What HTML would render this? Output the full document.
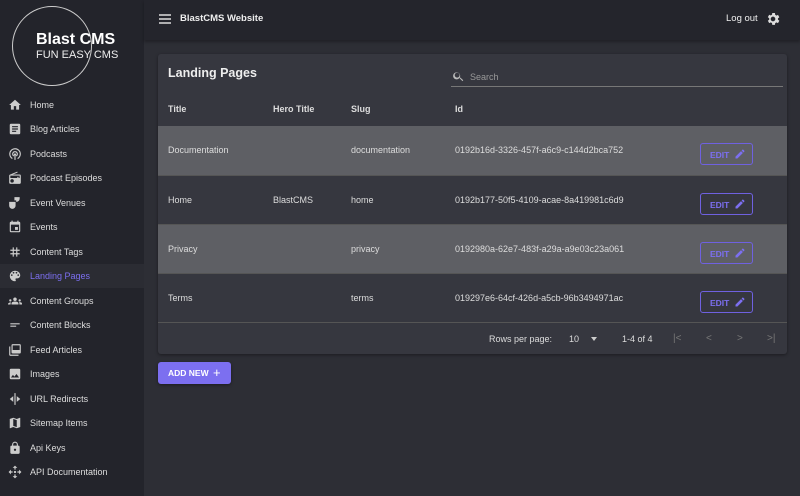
<!DOCTYPE html>
<html><head><style>
*{box-sizing:border-box;margin:0;padding:0}
body{width:800px;height:496px;overflow:hidden;background:#2d2e35;font-family:"Liberation Sans",sans-serif;color:#ddd;position:relative}
.side{position:absolute;left:0;top:0;width:144px;height:496px;background:#23242b}
.logo{position:absolute;left:12px;top:6px;width:80px;height:80px;border:1px solid #ccc;border-radius:50%}
.lt1{position:absolute;left:36px;top:31px;font-size:16px;font-weight:bold;color:#fff}
.lt2{position:absolute;left:36px;top:49px;font-size:11px;color:#eee}
.item{position:absolute;left:0;width:144px;height:24px;font-size:9px;color:#ddd;display:flex;align-items:center}
.item svg{position:absolute;left:8px;width:14px;height:14px;fill:#ccc}
.item span{position:absolute;left:30px}
.act{background:#2b2c33;color:#7c6ff0}
.top{position:absolute;left:144px;top:0;width:656px;height:40px;background:#24252c;box-shadow:0 2px 3px rgba(0,0,0,.3)}
.card{position:absolute;left:158px;top:54px;width:629px;height:300px;background:#36373f;border-radius:3px;box-shadow:0 1px 3px rgba(0,0,0,.4)}
.t{position:absolute;font-size:9px;color:#ddd}
.h{font-weight:bold}
.row{position:absolute;left:0;width:629px;border-bottom:1px solid #555}
.hl{background:#5e5f64}
.edit{position:absolute;left:542px;width:53px;height:22px;border:1px solid #6f61e0;border-radius:3px;color:#7c6ff0;font-size:8.5px;font-weight:bold;padding:6px 0 0 9px}
.edit svg{position:absolute;left:33px;top:4px;width:12px;height:12px;fill:#7c6ff0}
</style></head><body>
<div class="side">
<div class="logo"></div><div class="lt1">Blast CMS</div><div class="lt2">FUN EASY CMS</div>
<div class="item" style="top:93px"><svg viewBox="0 0 24 24"><path d="M10 20v-6h4v6h5v-8h3L12 3 2 12h3v8z"/></svg><span>Home</span></div>
<div class="item" style="top:117px"><svg viewBox="0 0 24 24"><path d="M19 3H5a2 2 0 0 0-2 2v14a2 2 0 0 0 2 2h14a2 2 0 0 0 2-2V5a2 2 0 0 0-2-2zm-5 14H7v-2h7zm3-4H7v-2h10zm0-4H7V7h10z"/></svg><span>Blog Articles</span></div>
<div class="item" style="top:142px"><svg viewBox="0 0 24 24"><path d="M12 11a2 2 0 0 0-1 3.7V22h2v-7.3a2 2 0 0 0-1-3.7zm0-9a10 10 0 0 0-5 18.6l1-1.7A8 8 0 1 1 16 19l1 1.7A10 10 0 0 0 12 2zm0 5a5 5 0 0 0-2.5 9.3l1-1.7a3 3 0 1 1 3 0l1 1.7A5 5 0 0 0 12 7z"/></svg><span>Podcasts</span></div>
<div class="item" style="top:166px"><svg viewBox="0 0 24 24"><path d="M3.2 6.2A2 2 0 0 0 2 8v12a2 2 0 0 0 2 2h16a2 2 0 0 0 2-2V8a2 2 0 0 0-2-2H8.3l8.3-3.4L15.9 1zM7 20a3 3 0 1 1 0-6 3 3 0 0 1 0 6zm13-8h-2v-2h-2v2H4V8h16z"/></svg><span>Podcast Episodes</span></div>
<div class="item" style="top:191px"><svg viewBox="0 0 24 24"><path d="M2 16.5A5.5 5.5 0 0 0 7.5 22a5.5 5.5 0 0 0 5.5-5.5V10H2zM11 2v5.5h3V10h.5A5.5 5.5 0 0 0 20 4.5V2z"/></svg><span>Event Venues</span></div>
<div class="item" style="top:215px"><svg viewBox="0 0 24 24"><path d="M17 12h-5v5h5zM16 1v2H8V1H6v2H5a2 2 0 0 0-2 2v14a2 2 0 0 0 2 2h14a2 2 0 0 0 2-2V5a2 2 0 0 0-2-2h-1V1zm3 18H5V8h14z"/></svg><span>Events</span></div>
<div class="item" style="top:240px"><svg viewBox="0 0 24 24"><path d="M20 10V8h-4V4h-2v4h-4V4H8v4H4v2h4v4H4v2h4v4h2v-4h4v4h2v-4h4v-2h-4v-4zm-6 4h-4v-4h4z"/></svg><span>Content Tags</span></div>
<div class="item act" style="top:264px"><svg viewBox="0 0 24 24"><path d="M12 3a9 9 0 0 0 0 18 1.5 1.5 0 0 0 1.1-2.5 1.5 1.5 0 0 1 1.1-2.5H16a5 5 0 0 0 5-5c0-4.4-4-8-9-8zM6.5 12a1.5 1.5 0 1 1 0-3 1.5 1.5 0 0 1 0 3zm3-4a1.5 1.5 0 1 1 0-3 1.5 1.5 0 0 1 0 3zm5 0a1.5 1.5 0 1 1 0-3 1.5 1.5 0 0 1 0 3zm3 4a1.5 1.5 0 1 1 0-3 1.5 1.5 0 0 1 0 3z"/></svg><span>Landing Pages</span></div>
<div class="item" style="top:289px"><svg viewBox="0 0 24 24"><path d="M12 12.8c1.6 0 3 .4 4.2.9 1 .5 1.8 1.5 1.8 2.7V18H6v-1.6c0-1.2.7-2.2 1.8-2.7A10 10 0 0 1 12 12.8zM4 13a2 2 0 1 0 0-4 2 2 0 0 0 0 4zm1.1 1.1A7 7 0 0 0 0 16.4V18h4.5v-1.6c0-.8.2-1.6.6-2.3zM20 13a2 2 0 1 0 0-4 2 2 0 0 0 0 4zm4 3.4c0-.8-.5-1.6-1.2-1.9A7 7 0 0 0 18.9 14c.4.7.6 1.5.6 2.3V18H24zM12 6a3 3 0 1 1 0 6 3 3 0 0 1 0-6z"/></svg><span>Content Groups</span></div>
<div class="item" style="top:313px"><svg viewBox="0 0 24 24"><path d="M4 9h16v2H4zm0 4h10v2H4z"/></svg><span>Content Blocks</span></div>
<div class="item" style="top:338px"><svg viewBox="0 0 24 24"><path d="M4 6H2v14a2 2 0 0 0 2 2h14v-2H4zm16-4H8a2 2 0 0 0-2 2v12a2 2 0 0 0 2 2h12a2 2 0 0 0 2-2V4a2 2 0 0 0-2-2zm0 10H8V4h12z"/></svg><span>Feed Articles</span></div>
<div class="item" style="top:362px"><svg viewBox="0 0 24 24"><path d="M21 19V5a2 2 0 0 0-2-2H5a2 2 0 0 0-2 2v14a2 2 0 0 0 2 2h14a2 2 0 0 0 2-2zM8.5 13.5l2.5 3 3.5-4.5 4.5 6H5z"/></svg><span>Images</span></div>
<div class="item" style="top:387px"><svg viewBox="0 0 24 24"><path d="M11 2v20h2V2zM9 7l-6 5 6 5zm6 0v10l6-5z"/></svg><span>URL Redirects</span></div>
<div class="item" style="top:411px"><svg viewBox="0 0 24 24"><path d="M20.5 3l-.2.1L15 5.1 9 3 3.4 4.9c-.2.1-.4.3-.4.5V20.5c0 .3.2.5.5.5l.2-.1L9 18.9l6 2.1 5.6-1.9c.2-.1.4-.3.4-.5V3.5c0-.3-.2-.5-.5-.5zM15 19l-6-2.1V5l6 2.1z"/></svg><span>Sitemap Items</span></div>
<div class="item" style="top:436px"><svg viewBox="0 0 24 24"><path d="M18 8h-1V6A5 5 0 0 0 7 6v2H6a2 2 0 0 0-2 2v10a2 2 0 0 0 2 2h12a2 2 0 0 0 2-2V10a2 2 0 0 0-2-2zm-6 9a2 2 0 1 1 0-4 2 2 0 0 1 0 4zm3.1-9H8.9V6a3.1 3.1 0 0 1 6.2 0z"/></svg><span>Api Keys</span></div>
<div class="item" style="top:460px"><svg viewBox="0 0 24 24"><path d="M12 1l-4 4h3v3h2V5h3zM5 8l-4 4 4 4v-3h3v-2H5zm14 0v3h-3v2h3v3l4-4zM11 16v3H8l4 4 4-4h-3v-3zm1-6a2 2 0 1 0 0 4 2 2 0 0 0 0-4z"/></svg><span>API Documentation</span></div>
</div>
<div class="top">
<svg style="position:absolute;left:15px;top:14px" width="12" height="10" viewBox="0 0 12 10"><path d="M0 1h12M0 5h12M0 9h12" stroke="#ddd" stroke-width="1.4"/></svg>
<div class="t h" style="left:36px;top:13px;color:#eee;font-size:9.5px">BlastCMS Website</div>
<div class="t" style="left:582px;top:13px;color:#eee;font-size:9.5px">Log out</div>
<svg style="position:absolute;left:621px;top:11px" width="16" height="16" viewBox="0 0 24 24"><path fill="#ddd" d="M19.4 13a7.5 7.5 0 0 0 0-2l2.1-1.6-2-3.5-2.5 1a7.3 7.3 0 0 0-1.7-1L14.9 3h-4l-.4 2.7c-.6.3-1.2.6-1.7 1l-2.5-1-2 3.5L6.4 11a7.5 7.5 0 0 0 0 2l-2.1 1.6 2 3.5 2.5-1c.5.4 1.1.7 1.7 1l.4 2.7h4l.4-2.7c.6-.3 1.2-.6 1.7-1l2.5 1 2-3.5zM12 15.5a3.5 3.5 0 1 1 0-7 3.5 3.5 0 0 1 0 7z"/></svg>
</div>
<div class="card">
<div class="t" style="left:10px;top:12px;font-size:12.5px;font-weight:bold;color:#eee">Landing Pages</div>
<svg style="position:absolute;left:294px;top:16px" width="13" height="13" viewBox="0 0 24 24"><path fill="#bbb" d="M15.5 14h-.8l-.3-.3A6.5 6.5 0 1 0 14 14.4l.3.3v.8l5 5 1.5-1.5zm-6 0a4.5 4.5 0 1 1 0-9 4.5 4.5 0 0 1 0 9z"/></svg>
<div class="t" style="left:312px;top:18px;color:#999">Search</div>
<div style="position:absolute;left:293px;top:32px;width:332px;height:1px;background:#777"></div>
<div class="t h" style="left:10px;top:50px">Title</div>
<div class="t h" style="left:115px;top:50px">Hero Title</div>
<div class="t h" style="left:193px;top:50px">Slug</div>
<div class="t h" style="left:297px;top:50px">Id</div>
<div class="row hl" style="top:72px;height:50px"><div class="t" style="left:10px;top:19px">Documentation</div><div class="t" style="left:193px;top:19px">documentation</div><div class="t" style="left:297px;top:19px">0192b16d-3326-457f-a6c9-c144d2bca752</div><div class="edit" style="top:17px">EDIT<svg viewBox="0 0 24 24"><path d="M3 17.2V21h3.8l11-11-3.8-3.8zM20.7 7a1 1 0 0 0 0-1.4l-2.3-2.3a1 1 0 0 0-1.4 0l-1.8 1.8 3.8 3.8z"/></svg></div></div>
<div class="row" style="top:122px;height:49px"><div class="t" style="left:10px;top:19px">Home</div><div class="t" style="left:115px;top:19px">BlastCMS</div><div class="t" style="left:193px;top:19px">home</div><div class="t" style="left:297px;top:19px">0192b177-50f5-4109-acae-8a419981c6d9</div><div class="edit" style="top:17px">EDIT<svg viewBox="0 0 24 24"><path d="M3 17.2V21h3.8l11-11-3.8-3.8zM20.7 7a1 1 0 0 0 0-1.4l-2.3-2.3a1 1 0 0 0-1.4 0l-1.8 1.8 3.8 3.8z"/></svg></div></div>
<div class="row hl" style="top:171px;height:49px"><div class="t" style="left:10px;top:19px">Privacy</div><div class="t" style="left:193px;top:19px">privacy</div><div class="t" style="left:297px;top:19px">0192980a-62e7-483f-a29a-a9e03c23a061</div><div class="edit" style="top:17px">EDIT<svg viewBox="0 0 24 24"><path d="M3 17.2V21h3.8l11-11-3.8-3.8zM20.7 7a1 1 0 0 0 0-1.4l-2.3-2.3a1 1 0 0 0-1.4 0l-1.8 1.8 3.8 3.8z"/></svg></div></div>
<div class="row" style="top:220px;height:49px"><div class="t" style="left:10px;top:19px">Terms</div><div class="t" style="left:193px;top:19px">terms</div><div class="t" style="left:297px;top:19px">019297e6-64cf-426d-a5cb-96b3494971ac</div><div class="edit" style="top:17px">EDIT<svg viewBox="0 0 24 24"><path d="M3 17.2V21h3.8l11-11-3.8-3.8zM20.7 7a1 1 0 0 0 0-1.4l-2.3-2.3a1 1 0 0 0-1.4 0l-1.8 1.8 3.8 3.8z"/></svg></div></div>
<div class="t" style="left:331px;top:280px">Rows per page:</div>
<div class="t" style="left:411px;top:280px">10</div>
<div style="position:absolute;left:433px;top:283px;border:3px solid transparent;border-top:4px solid #ccc"></div>
<div class="t" style="left:464px;top:280px">1-4 of 4</div>
<div class="t" style="left:515px;top:279px;color:#777;font-size:10px">|&lt;</div>
<div class="t" style="left:548px;top:279px;color:#777;font-size:10px">&lt;</div>
<div class="t" style="left:579px;top:279px;color:#777;font-size:10px">&gt;</div>
<div class="t" style="left:609px;top:279px;color:#777;font-size:10px">&gt;|</div>
</div>
<div style="position:absolute;left:158px;top:362px;width:73px;height:22px;background:#7c6ff0;border-radius:3px;box-shadow:0 1px 3px rgba(0,0,0,.4);color:#fff;font-size:8.5px;font-weight:bold;padding:6px 0 0 10px">ADD NEW<span style="position:absolute;left:55px;top:3px;font-size:13px;font-weight:normal">+</span></div>
</body></html>
